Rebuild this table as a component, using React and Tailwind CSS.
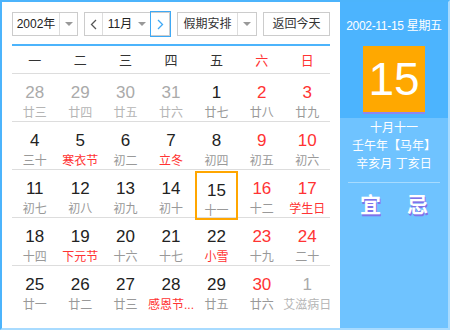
const WEEK = [
  { t: '一' }, { t: '二' }, { t: '三' }, { t: '四' }, { t: '五' },
  { t: '六', red: true }, { t: '日', red: true },
];

// o = not this month, r = weekend, f = festival text red, sel = today
const ROWS = [
  [
    { d: 28, l: '廿三', o: true }, { d: 29, l: '廿四', o: true }, { d: 30, l: '廿五', o: true },
    { d: 31, l: '廿六', o: true }, { d: 1, l: '廿七' }, { d: 2, l: '廿八', r: true }, { d: 3, l: '廿九', r: true },
  ],
  [
    { d: 4, l: '三十' }, { d: 5, l: '寒衣节', f: true }, { d: 6, l: '初二' }, { d: 7, l: '立冬', f: true },
    { d: 8, l: '初四' }, { d: 9, l: '初五', r: true }, { d: 10, l: '初六', r: true },
  ],
  [
    { d: 11, l: '初七' }, { d: 12, l: '初八' }, { d: 13, l: '初九' }, { d: 14, l: '初十' },
    { d: 15, l: '十一', sel: true }, { d: 16, l: '十二', r: true }, { d: 17, l: '学生日', r: true, f: true },
  ],
  [
    { d: 18, l: '十四' }, { d: 19, l: '下元节', f: true }, { d: 20, l: '十六' }, { d: 21, l: '十七' },
    { d: 22, l: '小雪', f: true }, { d: 23, l: '十九', r: true }, { d: 24, l: '二十', r: true },
  ],
  [
    { d: 25, l: '廿一' }, { d: 26, l: '廿二' }, { d: 27, l: '廿三' }, { d: 28, l: '感恩节...', f: true },
    { d: 29, l: '廿五' }, { d: 30, l: '廿六', r: true }, { d: 1, l: '艾滋病日', o: true },
  ],
];

const Caret = () => (
  <span className="w-0 h-0 border-l-[4px] border-r-[4px] border-t-[4px] border-l-transparent border-r-transparent border-t-[#999]" />
);

const Chevron = ({ dir, color }) => (
  <svg width="7" height="11" viewBox="0 0 7 11" fill="none">
    <path d={dir === 'left' ? 'M6 1L1.5 5.5L6 10' : 'M1 1L5.5 5.5L1 10'} stroke={color} strokeWidth="1.3" />
  </svg>
);

function DayCell({ c }) {
  const numColor = c.o ? 'text-[#aaaaaa]' : c.r ? 'text-[#ff3333]' : 'text-[#222]';
  const lunarColor = c.f ? 'text-[#ff3333]' : c.o ? 'text-[#b5b5b5]' : 'text-[#999]';
  return (
    <div className="flex items-stretch justify-center h-full">
      <div
        className={`flex flex-col items-center w-full ${
          c.sel ? 'border-2 border-[#ffa600] mx-[1px] my-[1px] pt-[8px]' : 'pt-[9px]'
        }`}
      >
        <span className={`text-[17px] leading-[20px] font-['Liberation_Sans',sans-serif] ${numColor}`}>{c.d}</span>
        <span className={`mt-[3px] text-[12px] leading-[14px] whitespace-nowrap ${lunarColor}`}>{c.l}</span>
      </div>
    </div>
  );
}

export default function App() {
  return (
    <div className="w-[450px] h-[330px] bg-white flex border-l-2 border-t-2 border-[#4cb4fc] border-r-2 border-r-[#a8dbff] border-b-2 border-b-[#a8dbff] font-['Liberation_Sans','Noto_Sans_CJK_SC',sans-serif] text-[12px] text-[#333]">
      <div className="w-[338px] px-[10px] pt-[10px]">
        <div className="flex h-[24px] text-[12px]">
          <div className="flex w-[66px] border border-[#cccccc]">
            <div className="w-[46px] flex items-center justify-center text-[#222]">2002年</div>
            <div className="flex-1 border-l border-[#dddddd] flex items-center justify-center"><Caret /></div>
          </div>
          <div className="flex w-[86px] ml-[6px] border border-[#cccccc]">
            <div className="w-[18px] flex items-center justify-center border-r border-[#dddddd]"><Chevron dir="left" color="#555" /></div>
            <div className="flex-1 flex items-center justify-center gap-[6px] text-[#222]">
              <span>11月</span>
              <Caret />
            </div>
            <div className="w-[19px] flex items-center justify-center outline outline-1 outline-[#3fa9f5] -my-px -mr-px"><Chevron dir="right" color="#3fa9f5" /></div>
          </div>
          <div className="flex w-[80px] ml-[7px] border border-[#cccccc]">
            <div className="w-[59px] flex items-center justify-center text-[#333]">假期安排</div>
            <div className="flex-1 border-l border-[#dddddd] flex items-center justify-center"><Caret /></div>
          </div>
          <div className="w-[67px] ml-[6px] border border-[#cccccc] flex items-center justify-center text-[#333]">返回今天</div>
        </div>
        <div className="mt-[8px] h-[2px] bg-[#4cb4fc]" />
        <div className="grid grid-cols-7 h-[28px] pt-[2px] border-b border-[#dddddd] items-center text-[13px]">
          {WEEK.map((w) => (
            <div key={w.t} className={`text-center ${w.red ? 'text-[#ff3333]' : 'text-[#333]'}`}>{w.t}</div>
          ))}
        </div>
        {ROWS.map((row, i) => (
          <div key={i} className={`grid grid-cols-7 h-[48px] ${i < ROWS.length - 1 ? 'border-b border-[#dddddd]' : ''}`}>
            {row.map((c, j) => (
              <DayCell key={j} c={c} />
            ))}
          </div>
        ))}
      </div>
      <div className="flex-1 flex flex-col text-white">
        <div className="h-[116px] bg-[#4cb4fe] flex flex-col items-center">
          <div className="mt-[16px] text-[12px] leading-[16px] tracking-[-0.3px]">2002-11-15 星期五</div>
          <div className="mt-[12px] w-[62px] h-[66px] bg-[#ffa800] flex items-center justify-center shadow-[0_2px_0_#8f86f0]">
            <span className="text-[46px] leading-none font-['Liberation_Sans',sans-serif]">15</span>
          </div>
        </div>
        <div className="flex-1 bg-[#6fc3ff] flex flex-col items-center">
          <div className="mt-[2px] leading-[17px] text-[12px] text-center">
            <div>十月十一</div>
            <div className="mt-[1px]">壬午年【马年】</div>
            <div className="mt-[1px]">辛亥月 丁亥日</div>
          </div>
          <div className="mt-[9px] w-[92px] h-px bg-[#a6dbff]" />
          <div className="mt-[10px] flex gap-[26px] text-[21px] leading-[24px] font-bold [text-shadow:1px_2px_0_#7f73ea]">
            <span>宜</span>
            <span>忌</span>
          </div>
        </div>
      </div>
    </div>
  );
}
